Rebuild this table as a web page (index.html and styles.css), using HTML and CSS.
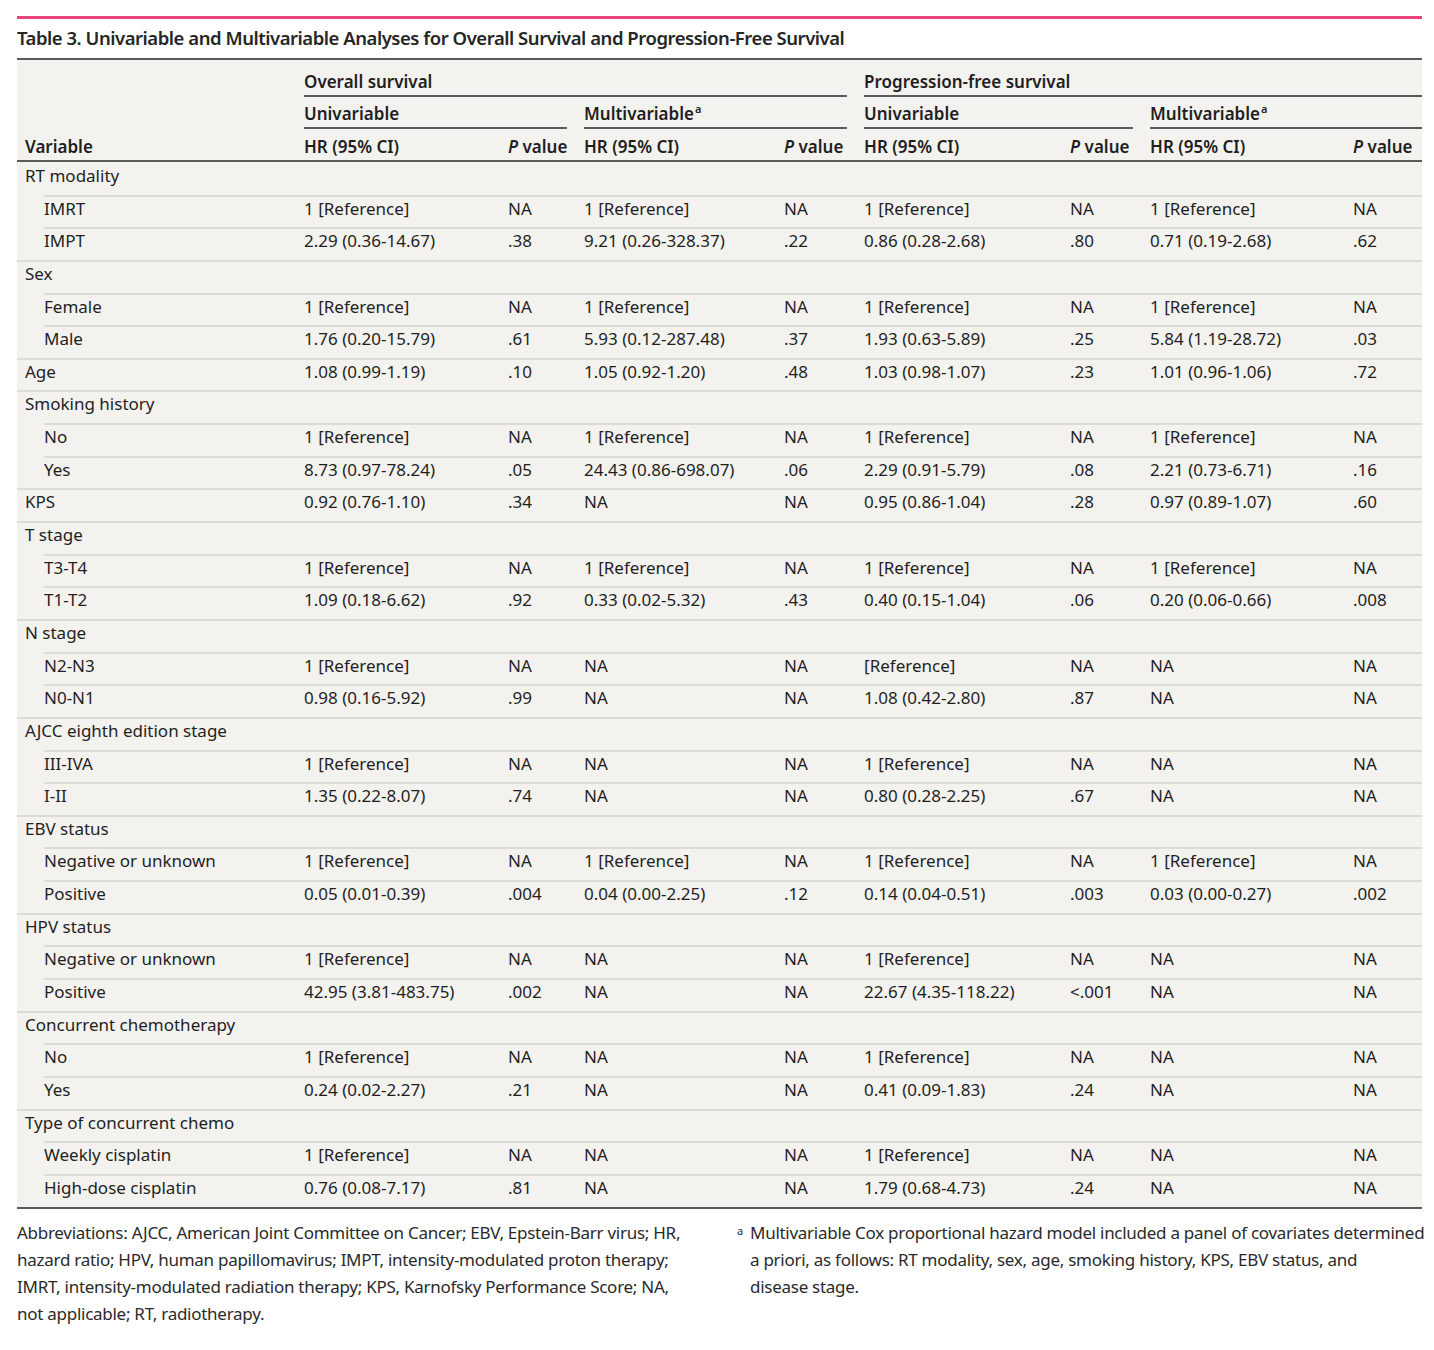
FILE: index.html
```html
<!DOCTYPE html>
<html lang="en">
<head>
<meta charset="utf-8">
<title>Table 3</title>
<link rel="stylesheet" href="styles.css">
</head>
<body>
<div class="page">
  <div class="rule"></div>
  <h1 class="title">Table 3. Univariable and Multivariable Analyses for Overall Survival and Progression-Free Survival</h1>
  <table class="tbl">
    <colgroup>
      <col class="c0"><col class="c1"><col class="c2"><col class="c3"><col class="c4"><col class="c5"><col class="c6"><col class="c7"><col class="c8">
    </colgroup>
    <thead>
      <tr class="h1">
        <th></th>
        <th colspan="4" class="grp"><div class="gl">Overall survival</div></th>
        <th colspan="4" class="grp last"><div class="gl">Progression-free survival</div></th>
      </tr>
      <tr class="h2">
        <th></th>
        <th colspan="2" class="grp"><div class="gl">Univariable</div></th>
        <th colspan="2" class="grp"><div class="gl">Multivariable<sup>a</sup></div></th>
        <th colspan="2" class="grp"><div class="gl">Univariable</div></th>
        <th colspan="2" class="grp last"><div class="gl">Multivariable<sup>a</sup></div></th>
      </tr>
      <tr class="h3">
        <th>Variable</th>
        <th>HR (95% CI)</th><th><i>P</i> value</th>
        <th>HR (95% CI)</th><th><i>P</i> value</th>
        <th>HR (95% CI)</th><th><i>P</i> value</th>
        <th>HR (95% CI)</th><th><i>P</i> value</th>
      </tr>
    </thead>
    <tbody>
      <tr><td>RT modality</td><td></td><td></td><td></td><td></td><td></td><td></td><td></td><td></td></tr>
      <tr class="sub"><td>IMRT</td><td>1 [Reference]</td><td>NA</td><td>1 [Reference]</td><td>NA</td><td>1 [Reference]</td><td>NA</td><td>1 [Reference]</td><td>NA</td></tr>
      <tr class="sub"><td>IMPT</td><td>2.29 (0.36-14.67)</td><td>.38</td><td>9.21 (0.26-328.37)</td><td>.22</td><td>0.86 (0.28-2.68)</td><td>.80</td><td>0.71 (0.19-2.68)</td><td>.62</td></tr>
      <tr><td>Sex</td><td></td><td></td><td></td><td></td><td></td><td></td><td></td><td></td></tr>
      <tr class="sub"><td>Female</td><td>1 [Reference]</td><td>NA</td><td>1 [Reference]</td><td>NA</td><td>1 [Reference]</td><td>NA</td><td>1 [Reference]</td><td>NA</td></tr>
      <tr class="sub"><td>Male</td><td>1.76 (0.20-15.79)</td><td>.61</td><td>5.93 (0.12-287.48)</td><td>.37</td><td>1.93 (0.63-5.89)</td><td>.25</td><td>5.84 (1.19-28.72)</td><td>.03</td></tr>
      <tr><td>Age</td><td>1.08 (0.99-1.19)</td><td>.10</td><td>1.05 (0.92-1.20)</td><td>.48</td><td>1.03 (0.98-1.07)</td><td>.23</td><td>1.01 (0.96-1.06)</td><td>.72</td></tr>
      <tr><td>Smoking history</td><td></td><td></td><td></td><td></td><td></td><td></td><td></td><td></td></tr>
      <tr class="sub"><td>No</td><td>1 [Reference]</td><td>NA</td><td>1 [Reference]</td><td>NA</td><td>1 [Reference]</td><td>NA</td><td>1 [Reference]</td><td>NA</td></tr>
      <tr class="sub"><td>Yes</td><td>8.73 (0.97-78.24)</td><td>.05</td><td>24.43 (0.86-698.07)</td><td>.06</td><td>2.29 (0.91-5.79)</td><td>.08</td><td>2.21 (0.73-6.71)</td><td>.16</td></tr>
      <tr><td>KPS</td><td>0.92 (0.76-1.10)</td><td>.34</td><td>NA</td><td>NA</td><td>0.95 (0.86-1.04)</td><td>.28</td><td>0.97 (0.89-1.07)</td><td>.60</td></tr>
      <tr><td>T stage</td><td></td><td></td><td></td><td></td><td></td><td></td><td></td><td></td></tr>
      <tr class="sub"><td>T3-T4</td><td>1 [Reference]</td><td>NA</td><td>1 [Reference]</td><td>NA</td><td>1 [Reference]</td><td>NA</td><td>1 [Reference]</td><td>NA</td></tr>
      <tr class="sub"><td>T1-T2</td><td>1.09 (0.18-6.62)</td><td>.92</td><td>0.33 (0.02-5.32)</td><td>.43</td><td>0.40 (0.15-1.04)</td><td>.06</td><td>0.20 (0.06-0.66)</td><td>.008</td></tr>
      <tr><td>N stage</td><td></td><td></td><td></td><td></td><td></td><td></td><td></td><td></td></tr>
      <tr class="sub"><td>N2-N3</td><td>1 [Reference]</td><td>NA</td><td>NA</td><td>NA</td><td>[Reference]</td><td>NA</td><td>NA</td><td>NA</td></tr>
      <tr class="sub"><td>N0-N1</td><td>0.98 (0.16-5.92)</td><td>.99</td><td>NA</td><td>NA</td><td>1.08 (0.42-2.80)</td><td>.87</td><td>NA</td><td>NA</td></tr>
      <tr><td>AJCC eighth edition stage</td><td></td><td></td><td></td><td></td><td></td><td></td><td></td><td></td></tr>
      <tr class="sub"><td>III-IVA</td><td>1 [Reference]</td><td>NA</td><td>NA</td><td>NA</td><td>1 [Reference]</td><td>NA</td><td>NA</td><td>NA</td></tr>
      <tr class="sub"><td>I-II</td><td>1.35 (0.22-8.07)</td><td>.74</td><td>NA</td><td>NA</td><td>0.80 (0.28-2.25)</td><td>.67</td><td>NA</td><td>NA</td></tr>
      <tr><td>EBV status</td><td></td><td></td><td></td><td></td><td></td><td></td><td></td><td></td></tr>
      <tr class="sub"><td>Negative or unknown</td><td>1 [Reference]</td><td>NA</td><td>1 [Reference]</td><td>NA</td><td>1 [Reference]</td><td>NA</td><td>1 [Reference]</td><td>NA</td></tr>
      <tr class="sub"><td>Positive</td><td>0.05 (0.01-0.39)</td><td>.004</td><td>0.04 (0.00-2.25)</td><td>.12</td><td>0.14 (0.04-0.51)</td><td>.003</td><td>0.03 (0.00-0.27)</td><td>.002</td></tr>
      <tr><td>HPV status</td><td></td><td></td><td></td><td></td><td></td><td></td><td></td><td></td></tr>
      <tr class="sub"><td>Negative or unknown</td><td>1 [Reference]</td><td>NA</td><td>NA</td><td>NA</td><td>1 [Reference]</td><td>NA</td><td>NA</td><td>NA</td></tr>
      <tr class="sub"><td>Positive</td><td>42.95 (3.81-483.75)</td><td>.002</td><td>NA</td><td>NA</td><td>22.67 (4.35-118.22)</td><td>&lt;.001</td><td>NA</td><td>NA</td></tr>
      <tr><td>Concurrent chemotherapy</td><td></td><td></td><td></td><td></td><td></td><td></td><td></td><td></td></tr>
      <tr class="sub"><td>No</td><td>1 [Reference]</td><td>NA</td><td>NA</td><td>NA</td><td>1 [Reference]</td><td>NA</td><td>NA</td><td>NA</td></tr>
      <tr class="sub"><td>Yes</td><td>0.24 (0.02-2.27)</td><td>.21</td><td>NA</td><td>NA</td><td>0.41 (0.09-1.83)</td><td>.24</td><td>NA</td><td>NA</td></tr>
      <tr><td>Type of concurrent chemo</td><td></td><td></td><td></td><td></td><td></td><td></td><td></td><td></td></tr>
      <tr class="sub"><td>Weekly cisplatin</td><td>1 [Reference]</td><td>NA</td><td>NA</td><td>NA</td><td>1 [Reference]</td><td>NA</td><td>NA</td><td>NA</td></tr>
      <tr class="sub"><td>High-dose cisplatin</td><td>0.76 (0.08-7.17)</td><td>.81</td><td>NA</td><td>NA</td><td>1.79 (0.68-4.73)</td><td>.24</td><td>NA</td><td>NA</td></tr>
    </tbody>
  </table>
  <div class="notes">
    <p class="note">Abbreviations: AJCC, American Joint Committee on Cancer; EBV, Epstein-Barr virus; HR, hazard ratio; HPV, human papillomavirus; IMPT, intensity-modulated proton therapy; IMRT, intensity-modulated radiation therapy; KPS, Karnofsky Performance Score; NA, not applicable; RT, radiotherapy.</p>
    <p class="note fn"><sup class="mark">a</sup>Multivariable Cox proportional hazard model included a panel of covariates determined a priori, as follows: RT modality, sex, age, smoking history, KPS, EBV status, and <span class="nw">disease stage.</span></p>
  </div>
</div>
</body>
</html>
```

FILE: styles.css
```css
html, body {
  margin: 0;
  padding: 0;
  background: #ffffff;
}

body {
  font-family: "Noto Sans", "Open Sans", sans-serif;
  color: #1f1f1f;
  font-variant-ligatures: no-contextual;
  font-feature-settings: "calt" 0;
}

.page {
  width: 1405px;
  padding: 16px 12px 0 17px;
}

.rule {
  height: 3px;
  background: #e8457b;
}

.title {
  margin: 6px 0 7px;
  font-size: 18.5px;
  line-height: 26px;
  font-weight: 600;
  letter-spacing: -0.47px;
  color: #262626;
}

.tbl {
  width: 1405px;
  table-layout: fixed;
  border-collapse: separate;
  border-spacing: 0;
  background: #f3f2ee;
  border-top: 2px solid #5a5a5a;
  border-bottom: 2px solid #5a5a5a;
  font-size: 17px;
}

.c0 { width: 279px; }
.c1 { width: 204px; }
.c2 { width: 76px; }
.c3 { width: 200px; }
.c4 { width: 80px; }
.c5 { width: 206px; }
.c6 { width: 80px; }
.c7 { width: 203px; }
.c8 { width: 77px; }

.tbl th {
  text-align: left;
  font-weight: 600;
  line-height: 22px;
  padding-left: 8px;
  padding-right: 8px;
  padding-bottom: 0;
  vertical-align: bottom;
  white-space: nowrap;
}

.tbl th.grp {
  padding-right: 9px;
}

.tbl th.grp.last {
  padding-right: 0;
}

.gl {
  border-bottom: 2px solid #5a5a5a;
  padding-bottom: 2px;
}

.tbl .h1 th { padding-top: 11px; }
.tbl .h2 th { padding-top: 6px; }
.tbl .h3 th {
  padding-top: 7px;
  padding-bottom: 2px;
  border-bottom: 2px solid #5a5a5a;
}

.tbl i {
  font-style: italic;
}

.tbl sup {
  font-size: 11px;
  line-height: 0;
  vertical-align: 7px;
  margin-left: 1px;
}

.tbl td {
  line-height: 22px;
  padding: 1px 8px 7.65px;
  border-top: 2px solid #dddbd5;
  white-space: nowrap;
  vertical-align: top;
}

.tbl tbody tr:first-child td {
  border-top: 0;
  padding-top: 3px;
  padding-bottom: 7.65px;
}

.tbl tr.sub td:first-child {
  padding-left: 27px;
  border-top-color: transparent;
  background-image: linear-gradient(#dddbd5, #dddbd5);
  background-origin: border-box;
  background-position: 27px 0;
  background-size: calc(100% - 27px) 2px;
  background-repeat: no-repeat;
}

.notes {
  display: grid;
  grid-template-columns: 676px 697px;
  column-gap: 44px;
  margin-top: 10px;
}

.note {
  margin: 0;
  font-size: 17px;
  line-height: 27px;
  letter-spacing: -0.27px;
  color: #2a2a2a;
}

.nw {
  white-space: nowrap;
}

.fn {
  position: relative;
  padding-left: 13px;
}

.mark {
  position: absolute;
  left: 0;
  top: 6px;
  font-size: 11px;
  line-height: 11px;
}
```
